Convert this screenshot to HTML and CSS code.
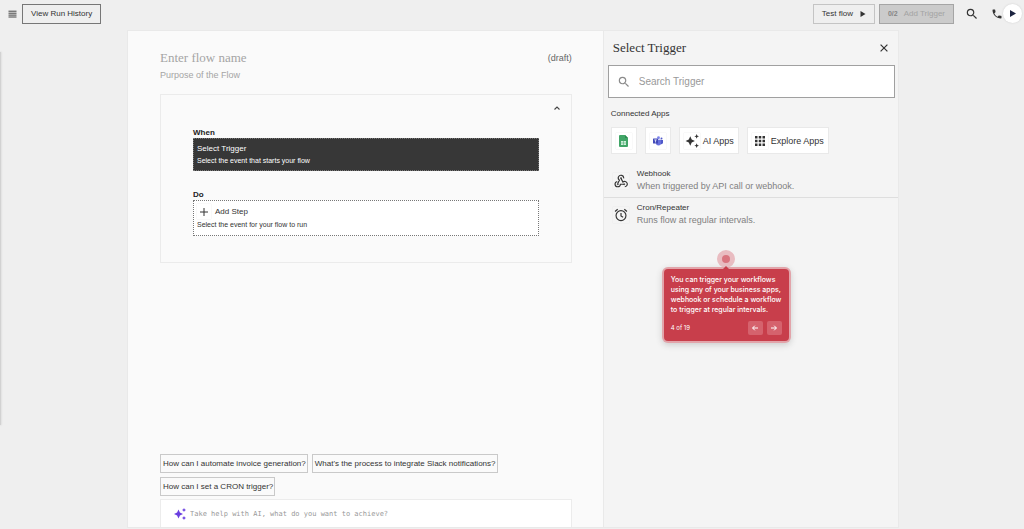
FILE: index.html
```html
<!DOCTYPE html>
<html lang="en">
<head>
<meta charset="utf-8">
<title>Flow editor</title>
<link rel="stylesheet" href="styles.css">
</head>
<body>
<header class="topbar">
  <button class="icon-btn" aria-label="Menu"><svg width="9" height="8" viewBox="0 0 9 8" stroke="#444" stroke-width="1"><path d="M.5 1.2h8M.5 3.2h8M.5 5.1h8M.5 7h8"/></svg></button>
  <button class="btn btn-history">View Run History</button>
  <span class="spacer"></span>
  <button class="btn btn-test">Test flow <svg width="6" height="6" viewBox="0 0 5 6"><path d="M0 0l5 3-5 3z" fill="#333"/></svg></button>
  <button class="btn btn-add" disabled><b>0/2</b> Add Trigger</button>
  <button class="icon-btn search-btn" aria-label="Search"><svg width="14" height="14" viewBox="0 0 24 24"><path fill="#333" d="M15.5 14h-.79l-.28-.27A6.47 6.47 0 0 0 16 9.5 6.5 6.5 0 1 0 9.5 16c1.61 0 3.09-.59 4.23-1.57l.27.28v.79l5 4.99L20.49 19l-4.99-5zm-6 0C7.01 14 5 11.99 5 9.5S7.01 5 9.5 5 14 7.01 14 9.5 11.99 14 9.5 14z"/></svg></button>
  <button class="icon-btn" aria-label="Call"><svg width="12" height="12" viewBox="0 0 24 24"><path fill="#333" d="M6.62 10.79c1.44 2.83 3.76 5.14 6.59 6.59l2.2-2.2c.27-.27.67-.36 1.02-.24 1.12.37 2.33.57 3.57.57.55 0 1 .45 1 1V20c0 .55-.45 1-1 1-9.39 0-17-7.61-17-17 0-.55.45-1 1-1h3.5c.55 0 1 .45 1 1 0 1.25.2 2.45.57 3.57.11.35.03.74-.25 1.02l-2.2 2.2z"/></svg></button>
  <button class="icon-btn play-btn" aria-label="Play"><svg width="6" height="7" viewBox="0 0 6 7"><path d="M0 0l6 3.5-6 3.5z" fill="#1c2440"/></svg></button>
</header>
<div class="drawer-edge"></div>

<main class="workspace">
  <section class="flow">
    <div class="flow-head">
      <input class="flow-name" aria-label="Flow name" placeholder="Enter flow name">
      <span class="draft">(draft)</span>
    </div>
    <input class="flow-purpose" aria-label="Purpose" placeholder="Purpose of the Flow">
    <div class="card">
      <button class="icon-btn collapse" aria-label="Collapse"><svg width="6" height="4" viewBox="0 0 6 4"><path d="M.5 3.500L3 1l2.500 2.500" fill="none" stroke="#444" stroke-width="1.100"/></svg></button>
      <h2 class="label">When</h2>
      <button class="block block-trigger">
        <span class="block-title">Select Trigger</span>
        <span class="block-sub">Select the event that starts your flow</span>
      </button>
      <h2 class="label label-do">Do</h2>
      <button class="block block-step">
        <span class="block-title with-icon"><span class="plus"><svg width="8" height="8" viewBox="0 0 8 8"><path d="M4 0v8M0 4h8" stroke="#333" stroke-width="1"/></svg></span>Add Step</span>
        <span class="block-sub">Select the event for your flow to run</span>
      </button>
    </div>
    <div class="chips">
      <button class="chip">How can I automate invoice generation?</button>
      <button class="chip">What's the process to integrate Slack notifications?</button>
      <button class="chip">How can I set a CRON trigger?</button>
    </div>
    <label class="ai-box">
      <svg width="12" height="12" viewBox="0 0 24 24" fill="#6a3fe0"><path d="M9 3l2.800 6.200L18 12l-6.200 2.800L9 21l-2.800-6.200L0 12l6.200-2.800zM20 0l1.300 2.700L24 4l-2.700 1.300L20 8l-1.300-2.700L16 4l2.700-1.300zM20 16l1.300 2.700L24 20l-2.700 1.300L20 24l-1.300-2.700L16 20l2.700-1.300z"/></svg>
      <input aria-label="Ask AI" placeholder="Take help with AI, what do you want to achieve?">
    </label>
  </section>

  <aside class="picker">
    <div class="picker-head">
      <h1>Select Trigger</h1>
      <button class="icon-btn" aria-label="Close"><svg width="8" height="8" viewBox="0 0 8 8"><path d="M.6.6l6.800 6.800M7.400.6L.6 7.400" stroke="#333" stroke-width="1.200"/></svg></button>
    </div>
    <label class="search">
      <svg width="14" height="14" viewBox="0 0 24 24"><path fill="#8a8a8a" d="M15.500 14h-.79l-.28-.27A6.470 6.470 0 0 0 16 9.500 6.500 6.500 0 1 0 9.500 16c1.610 0 3.090-.59 4.230-1.570l.27.28v.79l5 4.990L20.490 19l-4.990-5zm-6 0C7.010 14 5 11.990 5 9.500S7.010 5 9.500 5 14 7.010 14 9.500 11.990 14 9.500 14z"/></svg>
      <input aria-label="Search Trigger" placeholder="Search Trigger">
    </label>
    <h2 class="connected">Connected Apps</h2>
    <div class="apps">
      <button class="app" aria-label="Google Sheets"><span class="tile"><svg width="9" height="12" viewBox="0 0 18 24"><path d="M2 0h10l6 6v16a2 2 0 0 1-2 2H2a2 2 0 0 1-2-2V2a2 2 0 0 1 2-2z" fill="#41a567"/><path d="M12 0l6 6h-6z" fill="#2b8a4e"/><path d="M4 12h10v8H4z" fill="#cfeedb"/><path d="M4 16h10M9 12v8" stroke="#41a567"/></svg></span></button>
      <button class="app" aria-label="Microsoft Teams"><span class="tile"><svg width="10" height="10" viewBox="0 0 20 20"><circle cx="17" cy="5" r="2" fill="#5059c9"/><path d="M13 8h7v5a3.500 3.500 0 0 1-7 0z" fill="#5059c9"/><circle cx="11" cy="3.500" r="2.800" fill="#7b83eb"/><path d="M6 7.500h10V14a5 5 0 0 1-10 0z" fill="#6870dc"/><rect y="5" width="10" height="10" rx="1" fill="#4149b8"/><path d="M2.500 7.800h5M5 7.800V13" stroke="#fff" stroke-width="1.400"/></svg></span></button>
      <button class="app"><span class="tile"><svg width="14" height="14" viewBox="0 0 24 24" fill="#333"><path d="M9 4l2.500 5.500L17 12l-5.500 2.500L9 20l-2.500-5.500L1 12l5.500-2.500zM20 0l1.200 2.800L24 4l-2.800 1.200L20 8l-1.200-2.800L16 4l2.800-1.200zM20 16l1.200 2.800L24 20l-2.800 1.200L20 24l-1.200-2.800L16 20l2.800-1.200z"/></svg></span>AI Apps</button>
      <button class="app"><span class="tile"><svg width="10" height="10" viewBox="0 0 20 20" fill="#333"><path d="M0 0h5v5H0zM7.500 0h5v5h-5zM15 0h5v5h-5zM0 7.500h5v5H0zM7.500 7.500h5v5h-5zM15 7.500h5v5h-5zM0 15h5v5H0zM7.500 15h5v5h-5zM15 15h5v5h-5z"/></svg></span>Explore Apps</button>
    </div>
    <ul class="triggers">
      <li><button class="trigger"><span class="tile"><svg width="14" height="14" viewBox="0 0 24 24" fill="none" stroke="#333" stroke-width="2"><path d="M5.500 12.800A4.600 4.600 0 1 0 11 17.500H17.500M18.500 21.900A4.600 4.600 0 1 0 15.300 13.700L12 7.500M16.500 7.500A4.600 4.600 0 1 0 9.300 10.600L6.200 16.500"/><circle cx="12" cy="7" r="1" fill="#333" stroke-width="1"/><circle cx="6.500" cy="17.500" r="1" fill="#333" stroke-width="1"/><circle cx="17.500" cy="17.500" r="1" fill="#333" stroke-width="1"/></svg></span><span class="trigger-text"><span class="trigger-name">Webhook</span><span class="trigger-sub">When triggered by API call or webhook.</span></span></button></li>
      <li><button class="trigger"><span class="tile"><svg width="14" height="14" viewBox="0 0 24 24" fill="none" stroke="#333" stroke-width="2"><circle cx="12" cy="13" r="8.500"/><path d="M12 8.500V13.500l3.600 2.200M1.800 6l4.500-3.800M22.200 6l-4.500-3.800"/></svg></span><span class="trigger-text"><span class="trigger-name">Cron/Repeater</span><span class="trigger-sub">Runs flow at regular intervals.</span></span></button></li>
    </ul>
    <div class="tour" role="dialog" aria-label="Tour">
      <span class="beacon"></span>
      <div class="tour-card">
        <p>You can trigger your workflows using any of your business apps, webhook or schedule a workflow to trigger at regular intervals.</p>
        <div class="tour-foot">
          <span class="tour-count">4 of 19</span>
          <button class="tour-btn" aria-label="Previous"><svg width="6" height="6" viewBox="0 0 6 6"><path d="M6 3H.6M2.800.7L.6 3l2.200 2.300" fill="none" stroke="#fff" stroke-width="1"/></svg></button>
          <button class="tour-btn" aria-label="Next"><svg width="6" height="6" viewBox="0 0 6 6"><path d="M0 3h5.400M3.200.7L5.400 3 3.200 5.300" fill="none" stroke="#fff" stroke-width="1"/></svg></button>
        </div>
      </div>
    </div>
  </aside>
</main>
</body>
</html>
```
FILE: styles.css
```css
* { box-sizing: border-box; }
body {
  margin: 0;
  min-height: 100vh;
  display: flex;
  flex-direction: column;
  background: #efefef;
  color: #333;
  font: 8px/10px "Liberation Sans", Arial, sans-serif;
}
button, input { font: inherit; color: inherit; margin: 0; padding: 0; border: 0; background: none; border-radius: 0; }
input { outline: 0; min-width: 0; }
h1, h2, p, ul { margin: 0; padding: 0; font-weight: 400; }
ul { list-style: none; }
svg { display: block; flex: none; }

.topbar { display: flex; align-items: center; height: 27px; margin-bottom: 3px; padding: 0 2px 0 8px; }
.icon-btn { display: flex; align-items: center; justify-content: center; }
.spacer { flex: 1; }
.btn { display: flex; align-items: center; justify-content: center; height: 20px; padding: 0 8px; border: 1px solid #8c8c8c; }
.btn-history { margin-left: 5px; border-color: #777; }
.btn-test { gap: 7px; border-color: #c4c4c4; }
.btn-add { gap: 6px; margin-left: 4px; border-color: #a5a5a5; background: #cbcbcb; color: #a3a3a3; }
.btn-add b { font-size: 7px; color: #858585; }
.search-btn { margin: 0 12px 0 11px; }
.play-btn { width: 19px; height: 19px; border-radius: 50%; background: #fff; box-shadow: 0 0 2px #ccc; }
.drawer-edge { position: absolute; left: 0; top: 52px; width: 1px; height: 373px; background: #d2d2d2; box-shadow: 0 0 2px #bbb; }

.workspace { flex: 1; display: grid; grid-template-columns: 477fr 295fr; margin: 0 125px 1px 127px; border: 1px solid #e9e9e9; }
.flow { display: flex; flex-direction: column; min-width: 0; padding: 19px 31px 0 32px; background: #fafafa; border-right: 1px solid #e9e9e9; }
.flow-head { display: flex; align-items: center; gap: 8px; }
.flow-name { flex: 1; height: 16px; font: 13px/16px "Liberation Serif", "Times New Roman", serif; }
.draft { font-size: 9px; color: #666; }
.flow-purpose { height: 12px; margin-top: 3px; font-size: 9px; }
.flow-name::placeholder, .flow-purpose::placeholder { color: #a5a5a5; opacity: 1; }
.card { display: flex; flex-direction: column; margin-top: 13px; padding: 8px 32px 26px; border: 1px solid #ebebeb; }
.collapse { align-self: flex-end; width: 10px; height: 10px; margin-right: -23px; }
.label { margin-top: 14px; font-size: 8px; line-height: 11px; font-weight: 700; color: #222; }
.label-do { margin-top: 18px; }
.block { display: flex; flex-direction: column; text-align: left; padding: 3px; border: 1px dotted #777; }
.block-trigger { background: #373737; color: #fff; }
.block-step { padding-bottom: 4px; background: #fff; }
.block-title { line-height: 13px; }
.block-sub { font-size: 7px; line-height: 12px; }
.with-icon { display: flex; align-items: center; gap: 4px; line-height: 15px; }
.plus { display: flex; align-items: center; justify-content: center; width: 14px; height: 15px; box-shadow: 0 0 1px #ddd; }
.chips { display: flex; flex-wrap: wrap; gap: 4px; margin-top: auto; }
.chip { height: 19px; padding: 0 1px 0 2px; border: 1px solid #c9c9c9; }
.ai-box { display: flex; align-items: center; gap: 4px; height: 28px; margin-top: 3px; padding: 0 13px; background: #fff; border: 1px solid #ececec; border-bottom: 0; }
.ai-box input { flex: 1; font: 7px/10px "DejaVu Sans Mono", monospace; }
.ai-box input::placeholder { color: #999; opacity: 1; }

.picker { position: relative; min-width: 0; background: #f4f4f4; }
.picker-head { display: flex; justify-content: space-between; align-items: center; height: 34px; padding: 0 10px 0 9px; }
.picker-head h1 { font: 13px/16px "Liberation Serif", "Times New Roman", serif; }
.search { display: flex; align-items: center; gap: 8px; height: 33px; margin: 0 3px 0 4px; padding: 0 8px; background: #fff; border: 1px solid #a0a0a0; }
.search input { flex: 1; font-size: 10px; line-height: 12px; }
.search input::placeholder { color: #999; opacity: 1; }
.connected { margin: 11px 7px 8px; font-size: 8px; line-height: 10px; }
.apps { display: flex; gap: 8px; padding: 0 7px; }
.app { display: flex; align-items: center; gap: 3px; height: 27px; padding: 0 4px; background: #fff; border: 1px solid #e9e9e9; font-size: 9px; }
.tile { display: flex; align-items: center; justify-content: center; flex: none; width: 16px; height: 16px; box-shadow: 0 0 1px #ddd; }
.triggers { margin-top: 10px; }
.triggers li + li { border-top: 1px solid #dedede; }
.trigger { display: flex; align-items: center; gap: 8px; width: 100%; height: 33px; padding: 0 9px; text-align: left; }
.trigger-text { display: flex; flex-direction: column; padding-bottom: 2px; line-height: 12px; }
.trigger-sub { font-size: 9px; color: #808080; }

.tour { position: absolute; left: 60px; top: 219px; width: 125px; display: flex; flex-direction: column; align-items: center; font-family: Inter, sans-serif; color: #fff; }
.beacon { width: 18px; height: 18px; border-radius: 50%; border: 5px solid #e9bcc1; background: #d9757f; }
.tour-card { position: relative; width: 100%; margin-top: 1px; padding: 6px 7px; border-radius: 4px; background: #c83e4b; box-shadow: 0 0 0 2px #e2a4aa, 0 2px 6px 2px #ccc; }
.tour-card::before { content: ""; position: absolute; left: 50%; top: -3px; margin-left: -3px; border: 3px solid transparent; border-top: 0; border-bottom-color: #c83e4b; }
.tour-card p { font-size: 7px; line-height: 10px; font-weight: 500; }
.tour-foot { display: flex; align-items: center; gap: 4px; margin-top: 6px; }
.tour-count { flex: 1; font-size: 6px; }
.tour-btn { display: flex; align-items: center; justify-content: center; width: 15px; height: 14px; border-radius: 2px; background: #d5626d; }
```
